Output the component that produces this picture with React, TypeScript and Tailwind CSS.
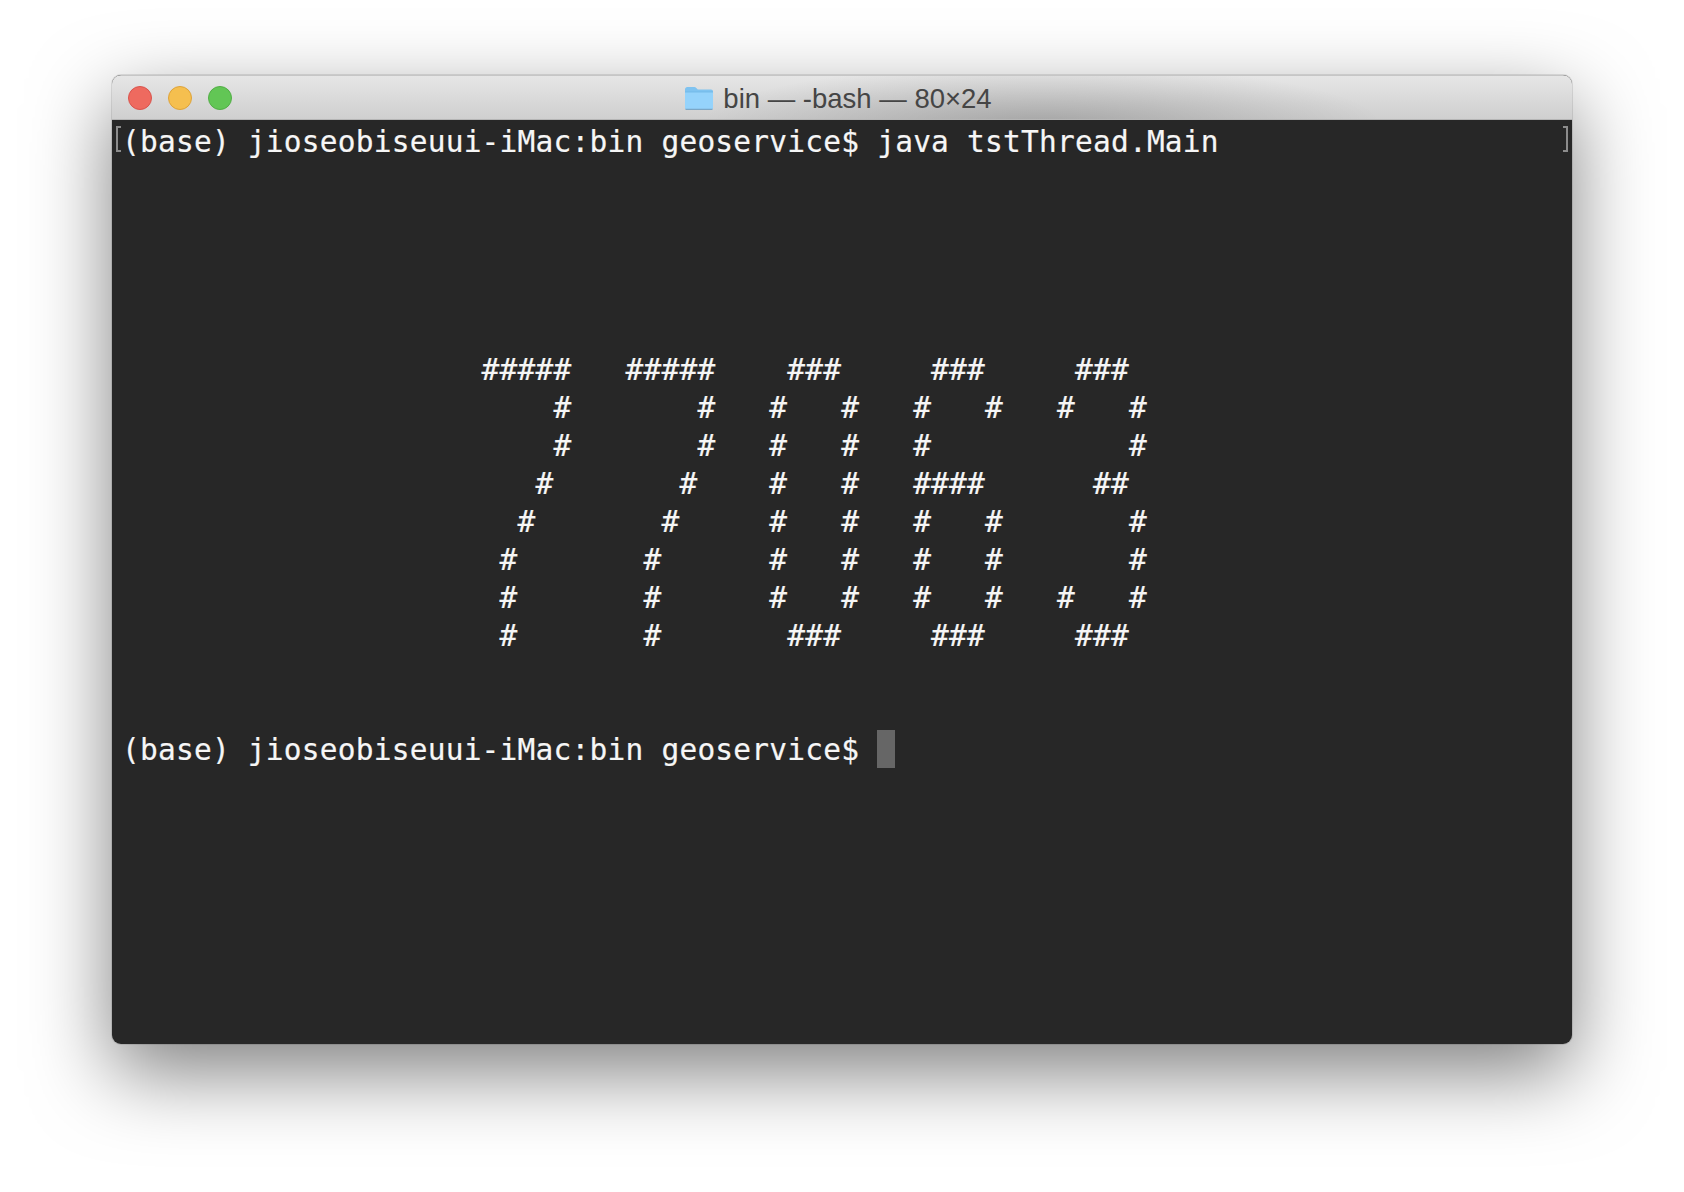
const art = [
  "#####   #####    ###     ###     ###",
  "    #       #   #   #   #   #   #   #",
  "    #       #   #   #   #           #",
  "   #       #    #   #   ####      ##",
  "  #       #     #   #   #   #       #",
  " #       #      #   #   #   #       #",
  " #       #      #   #   #   #   #   #",
  " #       #       ###     ###     ###",
];

function Line({ text = "" }: { text?: string }) {
  return <div className="h-[38px] whitespace-pre leading-[40px]">{text || " "}</div>;
}

function Folder() {
  return (
    <svg width="30" height="24" viewBox="0 0 30 24" aria-hidden="true">
      <path d="M1 3.5C1 2.1 2 1 3.4 1h6.8c.9 0 1.5.3 2.1 1l1.5 1.6H27c1.2 0 2 .9 2 2v15.8c0 1.1-.8 1.9-2 1.9H3c-1.2 0-2-.8-2-1.9z" fill="#7fc3f0" />
      <path d="M1 6h28v15.4c0 1.1-.8 1.9-2 1.9H3c-1.2 0-2-.8-2-1.9z" fill="#95d3fb" />
      <path d="M1 6h28" stroke="#6fb6e6" strokeWidth="0.8" fill="none" />
      <path d="M1.5 23.3h27" stroke="#6f9dbd" strokeWidth="1" fill="none" />
    </svg>
  );
}

export default function App() {
  return (
    <div className="flex h-[1192px] w-[1684px] items-start overflow-hidden bg-white pl-[112px] pt-[75px]">
      <div className="flex h-[969px] w-[1460px] flex-col overflow-hidden rounded-[9px] bg-[#272727] shadow-[0_0_0_1px_rgba(0,0,0,0.1),0_28px_80px_rgba(0,0,0,0.5)]">
        <div className="relative flex h-[45px] shrink-0 items-center border-b border-t border-b-[#b5b5b5] border-t-[#c6c6c6] bg-[radial-gradient(ellipse_340px_60px_at_930px_48px,rgba(0,0,0,0.2),rgba(0,0,0,0)),linear-gradient(to_bottom,#e6e6e6,#cfcfcf)] pl-[16px]">
          <div className="flex gap-[16px]">
            <span className="h-6 w-6 rounded-full border border-[#d9544d] bg-[#ee6a5f]" />
            <span className="h-6 w-6 rounded-full border border-[#dea33a] bg-[#f5bf4f]" />
            <span className="h-6 w-6 rounded-full border border-[#52ae46] bg-[#62c655]" />
          </div>
          <div className="absolute inset-x-0 top-0 flex h-full items-center justify-center gap-[9px] pr-[8px] pt-[1px] font-['Liberation_Sans',sans-serif] text-[27.5px] text-[#454545]">
            <Folder />
            <span className="relative top-[1px]">bin — -bash — 80×24</span>
          </div>
        </div>
        <div className="relative flex-1 pl-[10px] pt-[2px] font-['DejaVu_Sans_Mono',monospace] text-[29.5px] tracking-[0.22px] text-[#f6f6f6] [-webkit-text-stroke:0.2px_#f6f6f6]">
          <span className="absolute left-[4px] top-[6px] h-[26px] w-[5px] border-b-2 border-l-2 border-t-2 border-[#8c8c8c]" />
          <span className="absolute right-[4px] top-[6px] h-[26px] w-[5px] border-b-2 border-r-2 border-t-2 border-[#8c8c8c]" />
          <Line text="(base) jioseobiseuui-iMac:bin geoservice$ java tstThread.Main" />
          <Line />
          <Line />
          <Line />
          <Line />
          <Line />
          {art.map((row, i) => (
            <Line key={i} text={" ".repeat(20) + row} />
          ))}
          <Line />
          <Line />
          <div className="flex h-[38px] items-start whitespace-pre leading-[40px]">
            <span>(base) jioseobiseuui-iMac:bin geoservice$ </span>
            <span className="h-[38px] w-[18px] bg-[#666666]" />
          </div>
        </div>
      </div>
    </div>
  );
}
